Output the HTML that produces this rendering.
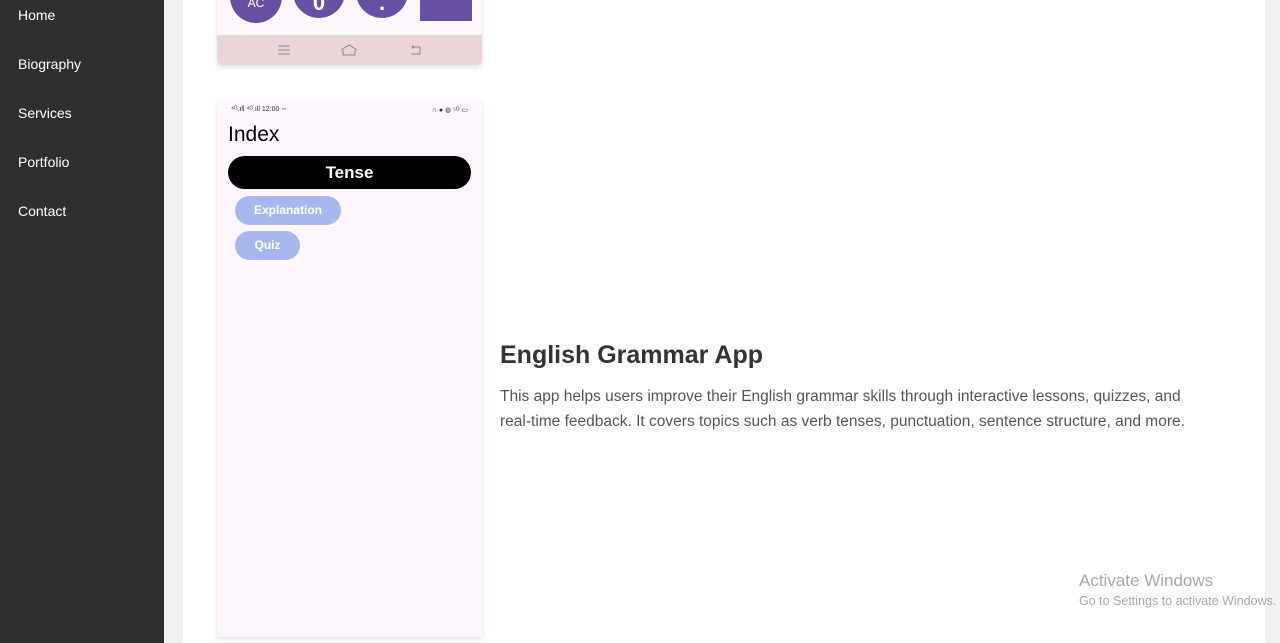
<!DOCTYPE html>
<html><head><style>
*{margin:0;padding:0;box-sizing:border-box}
body{width:1280px;height:643px;overflow:hidden;background:#f2f2f2;font-family:"Liberation Sans",sans-serif;position:relative}
.side{position:absolute;left:0;top:0;width:164px;height:643px;background:#2f2f2f}
.side a{position:absolute;left:18px;color:#fff;font-size:14px;text-decoration:none}
.main{position:absolute;left:183px;top:0;width:1082px;height:643px;background:#fff}
.card{position:absolute;left:217px;width:265px;background:#fdf7fd;box-shadow:0 2px 6px rgba(0,0,0,.12);border-radius:4px;overflow:hidden}
.circ{position:absolute;background:#6750a4;color:#fff;border-radius:50%;text-align:center}
.t{position:absolute;color:#fff;text-align:center;width:52px}
</style></head><body>
<div class="side">
<a style="top:7px">Home</a>
<a style="top:56px">Biography</a>
<a style="top:105px">Services</a>
<a style="top:154px">Portfolio</a>
<a style="top:203px">Contact</a>
</div>
<div class="main"></div>
<div class="card" style="top:-20px;height:85px">
  <div class="circ" style="left:13px;top:-10px;width:52px;height:53px"></div>
  <div class="t" style="left:13px;top:16px;font-size:12px">AC</div>
  <div class="circ" style="left:76px;top:-14px;width:52px;height:52px"></div>
  <div class="t" style="left:76px;top:10px;font-size:22px;font-weight:bold">0</div>
  <div class="circ" style="left:139px;top:-14px;width:52px;height:52px"></div>
  <div class="t" style="left:139px;top:10px;font-size:22px;font-weight:bold">.</div>
  <div style="position:absolute;left:203px;top:0;width:52px;height:41px;background:#6750a4"><div style="position:absolute;left:22px;top:16px;width:8px;height:4px;background:#d04040"></div></div>
  <div style="position:absolute;left:0;top:55px;width:265px;height:30px;background:#ead6d8">
    <svg width="265" height="30" style="position:absolute;left:0;top:0" fill="none" stroke="#888" stroke-width="1">
      <path d="M61 11h12M61 15h12M61 19h12"/>
      <path d="M124 15l8-5 8 5M126 15v5h12v-5"/>
      <path d="M195 12h8v7h-9M195 12l1.5-1.5M195 12l1.5 1.5"/>
    </svg>
  </div>
</div>
<div class="card" style="top:101px;height:536px;border-radius:4px 4px 0 0">
  <div style="position:absolute;left:14px;top:5px;font-size:7px;color:#333">⁴ᴳ.ıll ⁴ᴳ.ıll 12:00 ◦◦</div>
  <div style="position:absolute;right:14px;top:5px;font-size:7px;color:#333">∩ ● ◍ ⁵ᴳ ▭</div>
  <div style="position:absolute;left:11px;top:22px;font-size:21px;color:#000">Index</div>
  <div style="position:absolute;left:11px;top:55px;width:243px;height:33px;background:#000;border-radius:17px;color:#fff;font-size:17px;font-weight:bold;text-align:center;line-height:33px">Tense</div>
  <div style="position:absolute;left:18px;top:95px;width:106px;height:29px;background:#a8b8ee;border-radius:15px;color:#fff;font-size:12px;font-weight:bold;text-align:center;line-height:29px">Explanation</div>
  <div style="position:absolute;left:18px;top:130px;width:65px;height:29px;background:#a8b8ee;border-radius:15px;color:#fff;font-size:12px;font-weight:bold;text-align:center;line-height:29px">Quiz</div>
</div>
<div style="position:absolute;left:500px;top:341px;font-size:25px;font-weight:bold;color:#333">English Grammar App</div>
<div style="position:absolute;left:500px;top:384px;width:700px;font-size:15.5px;line-height:25px;color:#555">This app helps users improve their English grammar skills through interactive lessons, quizzes, and real-time feedback. It covers topics such as verb tenses, punctuation, sentence structure, and more.</div>
<div style="position:absolute;left:1079px;top:571px;font-size:17px;color:#a8a8a8">Activate Windows</div>
<div style="position:absolute;left:1079px;top:594px;font-size:12.5px;color:#a8a8a8;white-space:nowrap">Go to Settings to activate Windows.</div>
</body></html>
